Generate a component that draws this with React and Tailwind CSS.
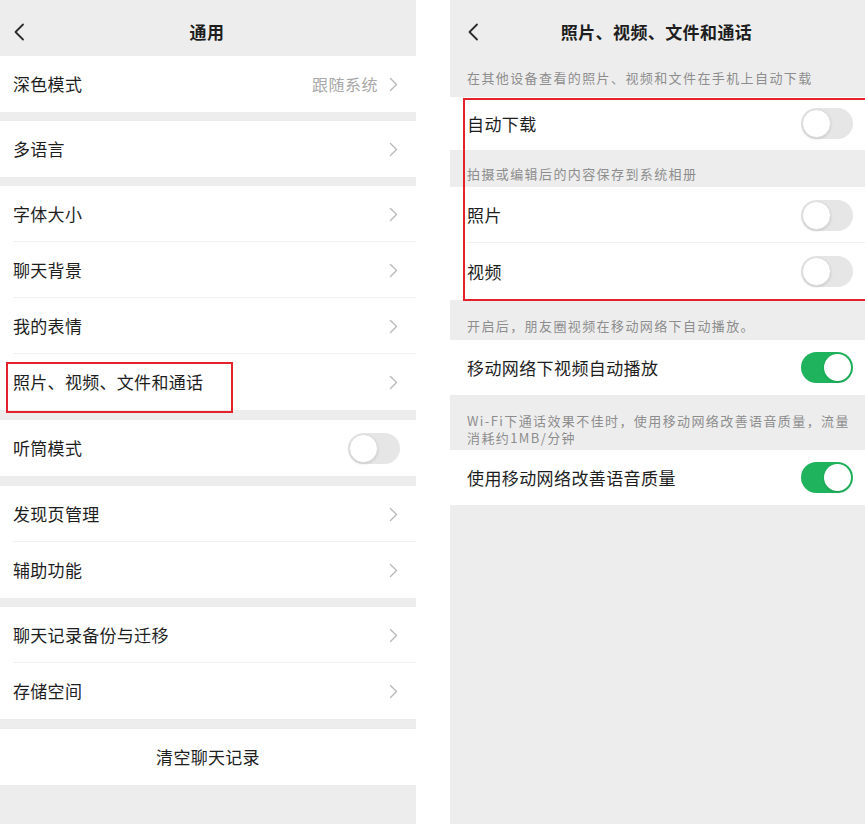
import React from "react";

const FONT = { fontFamily: '"Noto Sans CJK SC", "Noto Sans", sans-serif' };

const Chevron = () => (
  <svg width="9" height="15" viewBox="0 0 9 15" className="shrink-0">
    <polyline
      points="1.5,1.5 7.5,7.5 1.5,13.5"
      fill="none"
      stroke="#b8b8b8"
      strokeWidth="1.4"
      strokeLinecap="round"
      strokeLinejoin="round"
    />
  </svg>
);

const Back = () => (
  <svg width="12" height="18" viewBox="0 0 12 18" className="shrink-0">
    <polyline
      points="10,1.5 2.5,9 10,16.5"
      fill="none"
      stroke="#2a2a2a"
      strokeWidth="1.8"
      strokeLinecap="round"
      strokeLinejoin="round"
    />
  </svg>
);

const Toggle = ({ on }) =>
  on ? (
    <div className="w-[52px] h-[31px] rounded-full bg-[#1fb35d] flex items-center justify-end px-[2px] shrink-0">
      <div className="w-[27px] h-[27px] rounded-full bg-white shadow-sm" />
    </div>
  ) : (
    <div className="w-[52px] h-[31px] rounded-full bg-[#e6e6e6] flex items-center px-[1px] shrink-0">
      <div className="w-[29px] h-[29px] rounded-full bg-white border border-[#dcdcdc] shadow-sm" />
    </div>
  );

const Gap = ({ h }) => <div className={`bg-[#ededed] ${h}`} />;

const Row = ({ label, value, toggle, divider, pr = "pr-[18px]" }) => (
  <div className="bg-white relative">
    <div className={`h-14 flex items-center pl-[13px] ${pr}`}>
      <span className="flex-1 text-[17px] text-[#1e1e1e] tracking-[0.3px]">{label}</span>
      {value && <span className="text-[16px] text-[#a8a8a8] tracking-[0.5px] mr-[11px]">{value}</span>}
      {toggle !== undefined ? <Toggle on={toggle} /> : <Chevron />}
    </div>
    {divider && <div className="absolute bottom-0 left-[13px] right-0 h-px bg-[#f0f0f0]" />}
  </div>
);

const Header = ({ title, pl }) => (
  <div className={`h-14 flex items-center relative pt-[8px] ${pl}`}>
    <Back />
    <div className="absolute inset-0 pt-[8px] flex items-center justify-center">
      <span className="text-[17px] font-semibold text-[#1e1e1e] tracking-[0.4px] ml-[-2px]">{title}</span>
    </div>
  </div>
);

const LeftPanel = () => (
  <div className="w-[416px] h-[824px] bg-[#ededed] flex flex-col shrink-0">
    <Header title="通用" pl="pl-[13px]" />
    <Row label="深色模式" value="跟随系统" />
    <Gap h="h-[9px]" />
    <Row label="多语言" />
    <Gap h="h-[9px]" />
    <Row label="字体大小" divider />
    <Row label="聊天背景" divider />
    <Row label="我的表情" divider />
    <Row label="照片、视频、文件和通话" />
    <Gap h="h-[10px]" />
    <Row label="听筒模式" toggle={false} pr="pr-[16px]" />
    <Gap h="h-[10px]" />
    <Row label="发现页管理" divider />
    <Row label="辅助功能" />
    <Gap h="h-[9px]" />
    <Row label="聊天记录备份与迁移" divider />
    <Row label="存储空间" />
    <Gap h="h-[10px]" />
    <div className="bg-white h-14 flex items-center justify-center">
      <span className="text-[17px] text-[#1e1e1e] tracking-[0.3px]">清空聊天记录</span>
    </div>
  </div>
);

const Desc = ({ children, h, pt }) => (
  <div className={`${h} ${pt} pl-[17px] pr-[10px] text-[13px] leading-[17px] tracking-[1.4px] text-[#8d8d8d]`}>
    {children}
  </div>
);

const RRow = ({ label, on, h = "h-14", divider }) => (
  <div className="bg-white relative">
    <div className={`${h} flex items-center pl-[17px] pr-[12px]`}>
      <span className="flex-1 text-[17px] text-[#1e1e1e] tracking-[0.4px]">{label}</span>
      <Toggle on={on} />
    </div>
    {divider && <div className="absolute bottom-0 left-[17px] right-0 h-px bg-[#f0f0f0]" />}
  </div>
);

const RightPanel = () => (
  <div className="flex-1 h-[824px] bg-[#ededed] flex flex-col">
    <Header title="照片、视频、文件和通话" pl="pl-[17px]" />
    <Desc h="h-[41px]" pt="pt-[13px]">在其他设备查看的照片、视频和文件在手机上自动下载</Desc>
    <RRow label="自动下载" on={false} h="h-[53px]" />
    <Desc h="h-[37px]" pt="pt-[15px]">拍摄或编辑后的内容保存到系统相册</Desc>
    <RRow label="照片" on={false} divider />
    <RRow label="视频" on={false} h="h-[57px]" />
    <Desc h="h-[40px]" pt="pt-[17px]">开启后，朋友圈视频在移动网络下自动播放。</Desc>
    <RRow label="移动网络下视频自动播放" on h="h-[55px]" />
    <Desc h="h-[55px]" pt="pt-[17px]">
      <span className="block">Wi-Fi下通话效果不佳时，使用移动网络改善语音质量，流量</span>
      <span className="block">消耗约1MB/分钟</span>
    </Desc>
    <RRow label="使用移动网络改善语音质量" on h="h-[55px]" />
  </div>
);

export default function App() {
  return (
    <div className="w-[865px] h-[824px] bg-white flex relative overflow-hidden" style={FONT}>
      <LeftPanel />
      <div className="w-[34px] shrink-0 bg-white" />
      <RightPanel />
      {/* red highlight boxes */}
      <div className="absolute left-[6px] top-[362px] w-[227px] h-[51px] border-2 border-[#e3222b]" />
      <div className="absolute left-[463px] top-[98px] w-[410px] h-[203px] border-2 border-[#e3222b]" />
    </div>
  );
}
